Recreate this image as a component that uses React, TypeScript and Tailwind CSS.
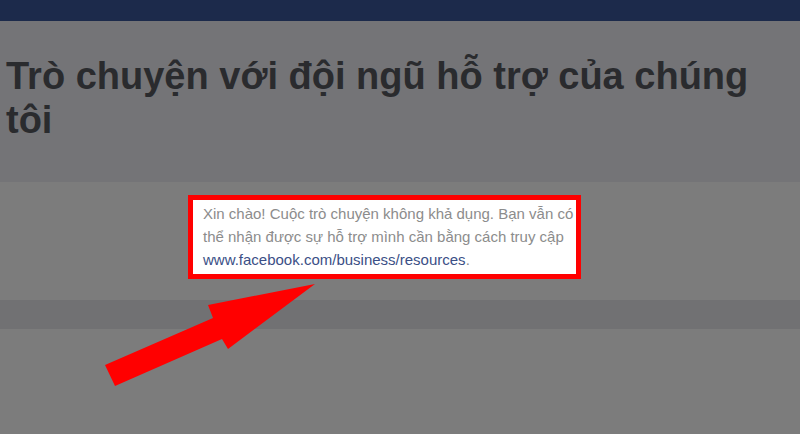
export default function App() {
  return (
    <div className="relative h-[434px] w-[800px] overflow-hidden bg-[#7c7c7c] font-['Liberation_Sans',Arial,sans-serif]">
      {/* top nav */}
      <div className="h-[21px] bg-[#1c2a4b]" />

      {/* page header */}
      <div className="h-[161px] bg-[#747477] pl-[6px] pt-[33px]">
        <h1 className="text-[38px] font-bold leading-[44px] text-[#2a2b2e]">
          Trò chuyện với đội ngũ hỗ trợ của chúng tôi
        </h1>
      </div>

      {/* chat notice */}
      <div className="h-[118px] pt-[13px]">
        <div className="ml-[188px] w-[393px] border-[5px] border-[#ff0000] bg-white">
          <p className="whitespace-nowrap pb-[3px] pl-[10px] pt-[2px] text-[15px] leading-[23px] text-[#8c8c8c]">
            Xin chào! Cuộc trò chuyện không khả dụng. Bạn vẫn có
            <br />
            thể nhận được sự hỗ trợ mình cần bằng cách truy cập
            <br />
            <a href="#" className="text-[#3b4f86]">
              www.facebook.com/business/resources
            </a>
            .
          </p>
        </div>
      </div>

      <div className="h-[29px] bg-[#717173]" />

      {/* annotation arrow */}
      <svg className="absolute left-0 top-0" width="800" height="434" viewBox="0 0 800 434">
        <polygon
          points="315,284 208,305 213,318 105,365 115,386 222,339 228,349"
          fill="#ff0000"
        />
      </svg>
    </div>
  )
}
